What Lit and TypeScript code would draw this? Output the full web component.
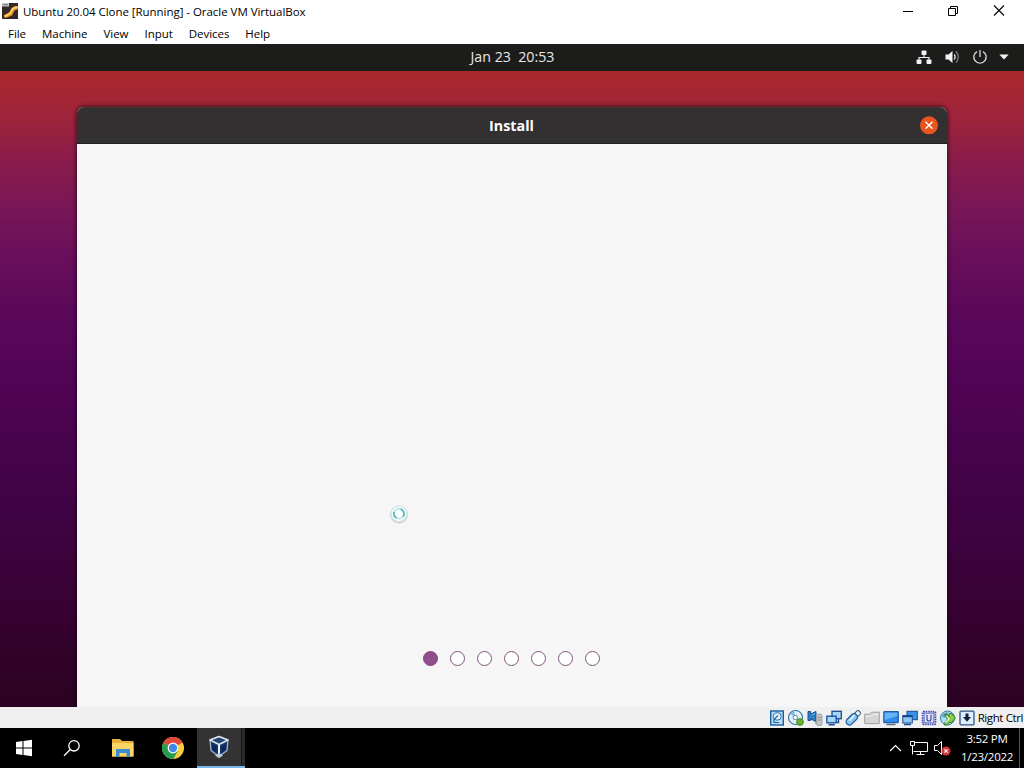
import { html, svg, css, LitElement } from 'lit';
import { customElement } from 'lit/decorators.js';

const MENU = ['File', 'Machine', 'View', 'Input', 'Devices', 'Help'];
const STEPS = [0, 1, 2, 3, 4, 5, 6];

// 16x16 indicators of the VM status bar
const INDICATORS = [
  // hard disk
  svg`<rect x="1.7" y="1" width="12.6" height="14" fill="#b9dcf7" stroke="#1a5d9c" stroke-width="1.4"/>
    <ellipse cx="8.2" cy="6.4" rx="4" ry="3.8" fill="#e6f4fd" stroke="#2670af"/>
    <path d="M9 5.5 5 9.5v3h5" stroke="#2468a6" stroke-width="1.2" fill="none"/>`,
  // optical disc
  svg`<circle cx="7.5" cy="7.5" r="7" fill="#e4eff7" stroke="#2d75a8" stroke-width="1.1"/>
    <path d="M7.3 7.5 2.3 4a6 6 0 0 1 4-2.4z" fill="#83bbdf"/>
    <circle cx="7.3" cy="7.5" r="2.2" fill="#fff" stroke="#5487a9"/>
    <circle cx="12" cy="12" r="3.4" fill="#68b331" stroke="#397c1c" stroke-width=".8"/>`,
  // audio
  svg`<path d="M1 1.5h2.5V4L9 1.5v10L3.500 9v1.500H1z" fill="#2e7fca" stroke="#184f8f"/>
    <path d="M4.5 5 8 3.500" stroke="#79bced" fill="none"/>
    <rect x="9.5" y="4" width="5.5" height="11.5" rx="2" fill="#c3c6c9" stroke="#9ca2a6"/>
    <path d="M10.5 7.500H14M10.500 10H14M7.500 12.500 9.500 14" stroke="#8c9398"/>`,
  // network
  svg`<rect x="6" y="1.3" width="9.3" height="7.4" fill="#a5d6f8" stroke="#174c91" stroke-width="1.3"/>
    <rect x=".8" y="6.2" width="9.4" height="6.6" fill="#a5d6f8" stroke="#174c91" stroke-width="1.3"/>
    <path d="M2.5 14.8h6.2M12.5 9v3.500H11" stroke="#174c91" stroke-width="1.4" fill="none"/>`,
  // usb
  svg`<g transform="rotate(45 8 8)"><rect x="4.8" y="3.3" width="6.6" height="13" rx="3" fill="#8cc5ef" stroke="#1b5c9e" stroke-width="1.2"/>
    <rect x="5.8" y="-1.2" width="4.6" height="4.5" fill="#e9f3fa" stroke="#325d82"/>
    <path d="M7.2 5.5v7" stroke="#e3f3fd" stroke-width="1.6"/></g>`,
  // shared folders
  svg`<path d="M.7 13.6V4.2h5l2-2h7.6v11.4z" fill="#d5d5d5" stroke="#a1a1a1"/>
    <path d="M1.5 6.2h6l1.700-1.700h5.500" stroke="#f1f1f1" fill="none"/>`,
  // display
  svg`<rect x=".8" y="1.7" width="14.5" height="11" rx=".8" fill="#2f8ceb" stroke="#235ba8" stroke-width="1.2"/>
    <path d="M1.8 2.7h12.5v3L1.8 10z" fill="#65b3fa"/><path d="M3.5 14.5h9" stroke="#65717f" stroke-width="1.6"/>`,
  // recording
  svg`<rect x="5" y="1.3" width="10.3" height="8.4" fill="#3a91e7" stroke="#174c91"/>
    <rect x=".8" y="5.5" width="9.5" height="7.5" fill="#8cc8f6" stroke="#174c91"/>
    <path d="M1 6.5h9M2 14.5h7" stroke="#174c91" stroke-width="1.5"/>`,
  // processor
  svg`<rect x="1.6" y="1.6" width="12.8" height="12.8" rx="1" fill="#c1c8f2" stroke="#424ca2" stroke-width="1.8" stroke-dasharray="1.4 .9"/>
    <rect x="3.3" y="3.3" width="9.4" height="9.4" fill="#dfe4fc" stroke="#6670bd" stroke-width=".7"/>
    <path d="M6 4.8V9q0 2 2 2t2-2V4.8" stroke="#3e4796" stroke-width="1.2" fill="none"/>`,
  // mouse integration
  svg`<circle cx="7.5" cy="8" r="7" fill="#b3def5" stroke="#2f77a7"/>
    <path d="M1.5 6q3-5 7-3.500L5 8q-2 0-3.500-2M4 13q1-3 4-1l-1 2.500z" fill="#5caac9"/>
    <path d="M4.5 4.5h3l1.500 2v-3h2.500l4 4.500-4 4.500H9L7 15H4l3.500-6z" fill="#86cf3f" stroke="#2c7424" stroke-width=".9"/>
    <path d="M5.5 12.500 9 9 6.500 6" stroke="#f2fbe8" fill="none" stroke-width="1.1"/>`,
  // host key
  svg`<rect x="1" y="1.2" width="14" height="13.6" rx="1" fill="#dceeff" stroke="#2c5484" stroke-width="1.3"/>
    <path d="M6.5 3.5h3V7H12l-4 4.800L4 7h2.500z" fill="#10233b"/>`,
];

@customElement('app-root')
export class AppRoot extends LitElement {
  static styles = css`
    :host {
      display: flex;
      flex-direction: column;
      width: 1024px;
      height: 768px;
      overflow: hidden;
      background: #fff;
      color: #000;
      font-family: 'Open Sans', 'Noto Sans', sans-serif;
      font-size: 12px;
    }
    svg {
      display: block;
      flex: none;
    }
    .titlebar {
      display: flex;
      align-items: center;
      height: 24px;
      padding-left: 2px;
    }
    .titlebar > svg {
      margin-bottom: 2px;
    }
    .caption {
      margin: 0 0 2px 5px;
      font-size: 11.5px;
      letter-spacing: -0.04px;
      white-space: nowrap;
    }
    .controls {
      display: flex;
      gap: 34px;
      margin: -3px 19px 0 auto;
    }
    .menu {
      display: flex;
      gap: 16px;
      height: 20px;
      padding-left: 8px;
      line-height: 20px;
      font-size: 11.5px;
      letter-spacing: -0.04px;
    }
    .panel {
      display: grid;
      grid-template-columns: 1fr auto 1fr;
      align-items: center;
      height: 27px;
      box-sizing: border-box;
      padding-bottom: 2px;
      background: #1c1d1b;
      color: #e8e8e6;
    }
    .clock {
      grid-column: 2;
      padding-left: 1px;
      font-size: 14.2px;
      white-space: pre;
    }
    .tray {
      display: flex;
      justify-content: flex-end;
      align-items: center;
      gap: 12px;
      padding-right: 15px;
    }
    .tray svg:last-child {
      margin-left: -1px;
    }
    .desktop {
      height: 636px;
      box-sizing: border-box;
      padding: 36px 77px 0;
      background: linear-gradient(
        180deg,
        #a9292c 0%,
        #a0243a 7%,
        #8a1c4a 14%,
        #781657 22%,
        #680e5b 30%,
        #5a075a 39%,
        #510455 49%,
        #47034c 60%,
        #400343 70%,
        #370232 85%,
        #2b0221 100%
      );
    }
    .window {
      display: flex;
      flex-direction: column;
      height: 100%;
      border-radius: 7px 7px 0 0;
      background: #f6f6f6;
      box-shadow: 0 0 4px 1px rgba(20, 0, 20, 0.65);
    }
    .header {
      display: grid;
      grid-template-columns: 1fr auto 1fr;
      align-items: center;
      height: 37px;
      box-sizing: border-box;
      border-top: 1px solid #3c3b38;
      border-bottom: 1px solid #222;
      border-radius: 7px 7px 0 0;
      background: #323030;
      color: #fff;
    }
    .header b {
      grid-column: 2;
      padding-right: 1px;
      font-size: 14.3px;
    }
    .header svg {
      justify-self: end;
      margin-right: 9px;
    }
    .page {
      flex: 1;
      display: flex;
      flex-direction: column;
      align-items: center;
    }
    .busy {
      margin: 360px 226px 0 0;
    }
    .steps {
      display: flex;
      gap: 12px;
      margin: 127px 2px 0 0;
    }
    .step {
      width: 15px;
      height: 15px;
      box-sizing: border-box;
      border: 1px solid #80557a;
      border-radius: 50%;
      background: #fff;
    }
    .step.current {
      background: #924d8b;
      border-color: #864580;
    }
    .status {
      display: flex;
      align-items: center;
      height: 21px;
      padding-right: 1px;
      justify-content: flex-end;
      gap: 3px;
      background: #f0f0f0;
      font-size: 11.5px;
      letter-spacing: -0.4px;
      white-space: nowrap;
    }
    .taskbar {
      display: flex;
      height: 40px;
      background: #000;
      color: #fff;
    }
    .app {
      display: flex;
      align-items: center;
      justify-content: center;
      width: 48px;
    }
    .app.wide {
      width: 54px;
    }
    .app.wide + .app {
      width: 47px;
      padding-right: 0;
    }
    .app.active {
      box-sizing: border-box;
      padding: 0 4px 0 0;
      border-bottom: 2px solid #76b9ed;
      background: linear-gradient(90deg, #333 0 44px, #151515 44px 45px, #2b2b2b 45px);
    }
    .notify {
      display: flex;
      align-items: center;
      margin-left: auto;
    }
    .time {
      width: 58px;
      margin-left: 7px;
      text-align: center;
      font-size: 11.5px;
      line-height: 18px;
      letter-spacing: -0.25px;
    }
    .peek {
      width: 5px;
      height: 40px;
      box-sizing: border-box;
      margin-left: 3px;
      border-left: 1px solid #555;
    }
  `;

  private titlebar() {
    return html`
      <div class="titlebar">
        <svg width="16" height="16" viewBox="0 0 16 16">
          <rect width="16" height="16" fill="#33282a" />
          <path d="M2 14.5V12l4-2 1.500-1 2-4L13 3h3v3l-3.500 1.500-2.500 5-5 2z" fill="#e9952b" />
          <path d="M3 13.5l5-3 3-5L15 4" stroke="#ffd569" stroke-width="1.5" fill="none" />
          <path d="M0 0h7v3.5H0z" fill="#c9c6c6" />
          <path d="M1 1.7h5" stroke="#777" />
        </svg>
        <span class="caption">Ubuntu 20.04 Clone [Running] - Oracle VM VirtualBox</span>
        <div class="controls">
          <svg width="12" height="12" viewBox="0 0 12 12"><path d="M2 6.5h10" stroke="#000" /></svg>
          <svg width="12" height="12" viewBox="0 0 12 12" fill="none" stroke="#000">
            <path d="M1.5 3.5h7v7h-7zM3.5 3.500v-2h7v7h-2" />
          </svg>
          <svg width="12" height="12" viewBox="0 0 12 12">
            <path d="M1 .5l10 10M11 .5l-10 10" stroke="#000" stroke-width="1.1" />
          </svg>
        </div>
      </div>
    `;
  }

  private panel() {
    return html`
      <div class="panel">
        <span class="clock">Jan 23  20:53</span>
        <div class="tray">
          <svg width="16" height="16" viewBox="0 0 16 16" fill="#f2f2f2">
            <rect x="5.5" y="1.5" width="5" height="4.5" rx="1" />
            <rect x=".5" y="10.5" width="5" height="4.5" rx="1" />
            <rect x="10.5" y="10.5" width="5" height="4.5" rx="1" />
            <path d="M8 5.5v3M3 11V8.500h10V11" fill="none" stroke="#f2f2f2" stroke-width="1.1" />
          </svg>
          <svg width="16" height="16" viewBox="0 0 16 16" fill="none">
            <path d="M1.5 5.500h3l4-3.500v12l-4-3.500h-3z" fill="#f2f2f2" />
            <path d="M10.2 5.500q2 2.500 0 5" stroke="#ddd" stroke-width="1.3" />
            <path d="M12 2.500q4.600 5.500 0 11" stroke="#888" stroke-width="1.2" />
          </svg>
          <svg width="16" height="16" viewBox="0 0 16 16" fill="none" stroke="#e8e8e8" stroke-width="1.2">
            <path d="M5 2.6a6.200 6.200 0 1 0 6 0M8 1v7" />
          </svg>
          <svg width="10" height="6" viewBox="0 0 10 6"><path d="M.3.5h9.400L5 5.500z" fill="#f2f2f2" /></svg>
        </div>
      </div>
    `;
  }

  private installer() {
    return html`
      <div class="desktop">
        <div class="window">
          <div class="header">
            <b>Install</b>
            <svg width="19" height="19" viewBox="0 0 19 19">
              <circle cx="10" cy="9.3" r="9" fill="#e9541f" />
              <path d="M6.5 5.800l7 7M13.500 5.800l-7 7" stroke="#fff" stroke-width="1.4" />
            </svg>
          </div>
          <div class="page">
            <svg class="busy" width="20" height="20" viewBox="0 0 20 20" fill="none">
              <circle cx="10" cy="10.5" r="8.2" stroke="#c9cfd0" stroke-width="1.4" />
              <circle cx="10" cy="9.7" r="7.6" fill="#fff" stroke="#d3ebed" stroke-width="1.2" />
              <circle cx="10" cy="9.7" r="5" stroke="#b9e6e8" stroke-width="1.7" />
              <path d="M11.5 4.900a5 5 0 0 1 2.500 7.800M5.200 8.100a5 5 0 0 0 2.500 6" stroke="#4fb2bc" stroke-width="1.6" />
            </svg>
            <div class="steps">
              ${STEPS.map((i) => html`<span class="step ${i === 0 ? 'current' : ''}"></span>`)}
            </div>
          </div>
        </div>
      </div>
    `;
  }

  private taskbar() {
    return html`
      <div class="taskbar">
        <div class="app">
          <svg width="18" height="18" viewBox="0 0 18 18" fill="#fff">
            <path d="M1 3l6.500-.9v6.400H1zM8.500 2 17 .8v7.700H8.500zM1 9.500h6.500v6.400L1 15zM8.500 9.500H17v7.700L8.500 16z" />
          </svg>
        </div>
        <div class="app">
          <svg width="18" height="18" viewBox="0 0 18 18" fill="none" stroke="#fff" stroke-width="1.3">
            <circle cx="11" cy="6.8" r="5.2" />
            <path d="M7.3 10.500 1 16.800" />
          </svg>
        </div>
        <div class="app wide">
          <svg width="22" height="20" viewBox="0 0 22 20">
            <path d="M0 1h8l2 2h11.500v15.500H0z" fill="#e9b03b" />
            <path d="M0 5h21.500v13.500H0z" fill="#fcd665" />
            <path d="M4 18.800V11h14v7.800h-3.500V15h-7v3.800z" fill="#3b8fd1" />
          </svg>
        </div>
        <div class="app">
          <svg width="24" height="24" viewBox="0 0 24 24">
            <circle cx="11" cy="12" r="11" fill="#fbcf3a" />
            <path d="M11 12 1.500 6.500A11 11 0 0 0 11.300 23l4.700-8.300z" fill="#269b50" />
            <path d="M11 12 1.500 6.500a11 11 0 0 1 19 0z" fill="#e0473a" />
            <circle cx="11" cy="12" r="5.4" fill="#fff" />
            <circle cx="11" cy="12" r="4.2" fill="#3f87ea" />
          </svg>
        </div>
        <div class="app active">
          <svg width="22" height="24" viewBox="0 0 22 24" stroke-linejoin="round">
            <path d="M11 1.500 20 5l-1 10.500-8 6-8-6L2 5z" fill="#17366b" stroke="#9fb5cf" stroke-width="1.3" />
            <path d="M2 5l9 4.500L20 5l-9-3.500z" fill="#25436f" stroke="#dce7f2" stroke-width="1.5" />
            <path d="M11 9.500V20" stroke="#e6eef6" stroke-width="2" />
            <path d="M4.500 9.500v5.200l4 2.600v-5.600zM17.500 9.500v5.200l-4 2.600v-5.600z" fill="#0b2557" />
            <path d="M7 20.500 11 18l4 2.500-4 2.700z" fill="#b8cadb" />
          </svg>
        </div>
        <div class="notify">
          <svg width="66" height="18" viewBox="0 0 66 18" fill="none" stroke="#fff">
            <path d="M5 12l5.500-5.500L16 12" stroke-width="1.2" />
            <path d="M30 3.500h12.500v9H28.500M35.500 12.500v3M31.500 15.500h8M25.500 2.500h4v4h-4zM27.500 6.500v9" />
            <path d="M49.500 6.500h3l4-4v13l-4-4h-3z" />
            <circle cx="61" cy="12" r="4.5" fill="#d6333b" stroke="none" />
            <path d="M59.300 10.300l3.400 3.400M62.700 10.300l-3.400 3.400" stroke-width="1.1" />
          </svg>
          <div class="time">3:52 PM<br />1/23/2022</div>
          <div class="peek"></div>
        </div>
      </div>
    `;
  }

  render() {
    return html`
      ${this.titlebar()}
      <div class="menu">${MENU.map((item) => html`<span>${item}</span>`)}</div>
      ${this.panel()} ${this.installer()}
      <div class="status">
        ${INDICATORS.map((icon) => html`<svg width="16" height="16" viewBox="0 0 16 16">${icon}</svg>`)}
        <span>Right Ctrl</span>
      </div>
      ${this.taskbar()}
    `;
  }
}
